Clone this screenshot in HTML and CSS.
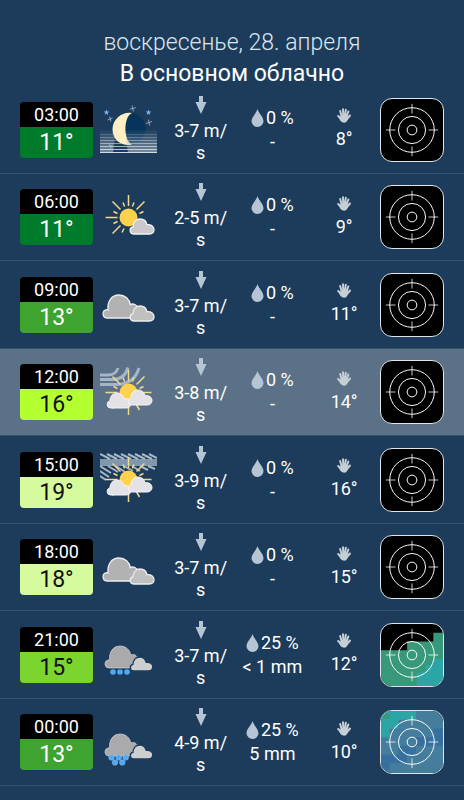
FILE: index.html
```html
<!DOCTYPE html>
<html lang="ru">
<head>
  <meta charset="UTF-8" />
  <meta name="viewport" content="width=device-width, initial-scale=1.0"/>
  <title>Прогноз погоды</title>
  <link rel="stylesheet" href="styles.css">
</head>
<body>
  <!-- shared icons -->
  <svg class="sprite" aria-hidden="true">
    <defs>
      <linearGradient id="fog" x1="0" y1="0" x2="0" y2="1">
        <stop offset="0" stop-color="#a9b8c6" stop-opacity="0"/>
        <stop offset="1" stop-color="#a9b8c6" stop-opacity=".65"/>
      </linearGradient>
    </defs>

    <symbol id="arrow" viewBox="0 0 12 18">
      <path d="M4 0h4v6h3.5L6 18 .5 6H4z" fill="#b5c5d3"/>
    </symbol>

    <symbol id="drop" viewBox="0 0 13 18">
      <path d="M6.500 0C7.500 4 12.500 8 12.500 12.200a6 5.800 0 0 1-12 0C.5 8 5.500 4 6.500 0z" fill="#b5c5d3"/>
    </symbol>

    <symbol id="hand" viewBox="0 0 14 15">
      <g fill="none" stroke="#c6cfd6" stroke-width="2" stroke-linecap="round">
        <path d="M4.800 9 3.200 3M6.400 8 6 1.200M8 8l.8-6.300M9.500 9l1.800-5.500M10 11l3-3.500M4.500 11.500 1.200 8"/>
      </g>
      <path d="M4 7.500h6l1.200 2.500c-.5 3-2 4.700-4.200 4.700S3 12.800 2.300 10.500z" fill="#c6cfd6"/>
    </symbol>

    <symbol id="target" viewBox="0 0 64 64">
      <g fill="none" stroke="#fff">
        <circle cx="32" cy="32" r="5"/>
        <circle cx="32" cy="32" r="14"/>
        <circle cx="32" cy="32" r="23"/>
        <path d="M32 5v10M32 49v10M5 32h10M49 32h10" stroke-opacity=".8"/>
      </g>
    </symbol>

    <symbol id="small-cloud" viewBox="0 0 26 17">
      <path d="M4.500 16a3.600 3.600 0 0 1-.6-7.100C4.200 4 7.200 1 11 1c3.600 0 6.300 2.300 7 5.700 3.800-.5 7 1.500 7 4.800 0 2.700-2 4.500-4.800 4.500z"/>
    </symbol>

    <symbol id="big-cloud" viewBox="0 0 38 25">
      <path d="M5 24a4.200 4.200 0 0 1-.6-8.300c.6-.2 1.300 0 1.700.2C5 7.500 9.500 1 17 1c6 0 10.600 4.200 11.200 9.600 3.200-1.600 6.800.2 7.300 3.400.5 2-.2 4-1 5.500L30 24z"/>
    </symbol>

    <symbol id="sun" viewBox="0 0 57 57">
      <g stroke="#f0d98c" stroke-width="1.500">
        <path d="M28.500 6v11M44.500 12.500l-8 8M12.500 12.500l8 8M5.500 28.500h12M12.500 44.500l8-8"/>
        <path d="M23 13.500l1.600 4M34 13.500l-1.600 4M13.500 22.500l4 2M43.500 22.500l-4 2M13.500 34.500l4-2M22 43.500l2-4"/>
      </g>
      <circle cx="28.500" cy="28.500" r="9" fill="#ffd24d"/>
    </symbol>

    <symbol id="night" viewBox="0 0 57 57">
      <circle cx="29" cy="28" r="16.500" fill="#06345a"/>
      <path d="M32 12C24 10 12.500 16.500 12.500 28.500S24 46 32 43.500C23.500 40 23 16 32 12z" fill="#fff0c4"/>
      <path d="M0 28h16l-3 24H0zM25 28h32v24H28z" fill="url(#fog)"/>
      <g stroke="#d3dce3">
        <path d="M0 33.500h13M26 33.500h31" opacity=".2"/>
        <path d="M0 36.500h15M27 36.500h30" opacity=".3"/>
        <path d="M0 39.500h17M28 39.500h29" opacity=".45"/>
        <path d="M0 42.500h21M30 42.500h27" opacity=".6"/>
        <path d="M0 45.500h57" opacity=".75"/>
        <path d="M0 48.500h57" opacity=".85"/>
        <path d="M0 51.500h57"/>
      </g>
      <path d="M6.500 8.500l.8 2 2.100.1-1.700 1.300.6 2.100-1.800-1.200L4.700 14l.6-2.100-1.700-1.300 2.100-.1zM48.500 8.500l.8 2 2.100.1-1.700 1.300.6 2.100-1.800-1.200-1.800 1.200.6-2.100-1.700-1.300 2.100-.1z" fill="#70b4f5"/>
      <path d="M32 4.500l1.500 6M29.800 8.200l6-1.500M9.500 15.500l1.500 5M7.500 19l5-2M48.500 18.500l1 6M46 22.500l6-2M9 42.500l2 5M7.500 46l5-2" stroke="#a7b9c8" stroke-width=".8"/>
    </symbol>

    <symbol id="sun-cloud" viewBox="0 0 57 57">
      <use href="#sun" width="57" height="57"/>
      <use href="#small-cloud" x="29" y="29" width="26" height="17" fill="#c9c9ce" stroke="#f3f3f6" stroke-width="1.300"/>
    </symbol>

    <symbol id="clouds" viewBox="0 0 57 57">
      <use href="#big-cloud" x="2" y="18" width="38" height="25" fill="#b2b2b2" stroke="#ededf0" stroke-width="1.300"/>
      <use href="#small-cloud" x="29" y="29" width="26" height="17" fill="#c0c0c0" stroke="#ededf0" stroke-width="1.300"/>
    </symbol>

    <symbol id="sun-two-clouds" viewBox="0 0 57 57">
      <use href="#sun" width="57" height="57"/>
      <path d="M39 28.500h12.500M28.500 40v11M36 40l3.500 6" stroke="#f0d98c" stroke-width="1.500"/>
      <use href="#small-cloud" x="6" y="28" width="26" height="17" fill="#e2e2e7" stroke="#f6f6f8"/>
      <use href="#small-cloud" x="27" y="25" width="26" height="17" fill="#e2e2e7" stroke="#f6f6f8"/>
    </symbol>

    <symbol id="windy" viewBox="0 0 57 57">
      <g fill="none" stroke="#a5b4c8" stroke-width="3">
        <path d="M0 11h8c5 0 9-3 10-7M0 15.500h13c8 0 13-5 15-12M0 20.500h16c12 0 20-6 23-16.500"/>
      </g>
      <use href="#sun-two-clouds" width="57" height="57"/>
    </symbol>

    <symbol id="veil" viewBox="0 0 57 57">
      <path d="M0 8h57v7H0z" fill="#8197ab"/>
      <g fill="none" stroke="#a9b7c4" stroke-width="2">
        <path d="M0 3l10 5M7 3l10 5M14 3l10 5M21 3l10 5M28 3l10 5M35 3l10 5M42 3l10 5M49 3l8 4"/>
        <path d="M0 15l11 7M0 20l9 6M0 25l6 4M8 15l10 6M16 15l9 6M24 15l9 5M32 15l8 5M40 15l8 4M48 15l7 3"/>
      </g>
      <use href="#sun-two-clouds" width="57" height="57"/>
    </symbol>

    <symbol id="rain-clouds" viewBox="0 0 57 57">
      <use href="#big-cloud" x="4" y="19" width="36" height="24" fill="#aaaaad" stroke="#c3c7cc"/>
      <use href="#small-cloud" x="29" y="30" width="25" height="16" fill="#cdcfd1" stroke="#1d3c5b" stroke-width="1.500"/>
    </symbol>

    <symbol id="rain" viewBox="0 0 57 57">
      <use href="#rain-clouds" width="57" height="57"/>
      <g fill="#4fa9f7">
        <circle cx="13" cy="46" r="2.800"/>
        <circle cx="20" cy="46" r="2.800"/>
        <circle cx="27" cy="46" r="2.800"/>
      </g>
    </symbol>

    <symbol id="heavy-rain" viewBox="0 0 57 57">
      <use href="#rain-clouds" width="57" height="57"/>
      <g fill="#4fa9f7" stroke="#8fc4f2" stroke-width=".5">
        <circle cx="11.500" cy="43.500" r="2.800"/>
        <circle cx="18.700" cy="43.500" r="2.800"/>
        <circle cx="25.700" cy="43.500" r="2.800"/>
        <circle cx="15" cy="48.500" r="2.800"/>
        <circle cx="22.300" cy="48.500" r="2.800"/>
      </g>
    </symbol>
  </svg>

  <header class="day">
    <h1 class="day-date">воскресенье, 28. апреля</h1>
    <p class="day-summary">В основном облачно</p>
  </header>

  <table class="forecast">
    <colgroup>
      <col class="col-time">
      <col span="4">
      <col class="col-radar">
    </colgroup>
    <tbody>
      <tr>
        <th scope="row"><div class="badge"><span class="time">03:00</span><span class="temp t11">11°</span></div></th>
        <td><svg class="sky"><use href="#night"/></svg></td>
        <td class="wind"><svg class="arrow"><use href="#arrow"/></svg>3-7 m/<br>s</td>
        <td class="rain"><div class="chance"><svg class="drop"><use href="#drop"/></svg>0 %</div>-</td>
        <td class="feels"><svg class="hand"><use href="#hand"/></svg>8°</td>
        <td><svg class="radar"><use href="#target"/></svg></td>
      </tr>
      <tr>
        <th scope="row"><div class="badge"><span class="time">06:00</span><span class="temp t11">11°</span></div></th>
        <td><svg class="sky"><use href="#sun-cloud"/></svg></td>
        <td class="wind"><svg class="arrow"><use href="#arrow"/></svg>2-5 m/<br>s</td>
        <td class="rain"><div class="chance"><svg class="drop"><use href="#drop"/></svg>0 %</div>-</td>
        <td class="feels"><svg class="hand"><use href="#hand"/></svg>9°</td>
        <td><svg class="radar"><use href="#target"/></svg></td>
      </tr>
      <tr>
        <th scope="row"><div class="badge"><span class="time">09:00</span><span class="temp t13">13°</span></div></th>
        <td><svg class="sky"><use href="#clouds"/></svg></td>
        <td class="wind"><svg class="arrow"><use href="#arrow"/></svg>3-7 m/<br>s</td>
        <td class="rain"><div class="chance"><svg class="drop"><use href="#drop"/></svg>0 %</div>-</td>
        <td class="feels"><svg class="hand"><use href="#hand"/></svg>11°</td>
        <td><svg class="radar"><use href="#target"/></svg></td>
      </tr>
      <tr class="current">
        <th scope="row"><div class="badge"><span class="time">12:00</span><span class="temp t16">16°</span></div></th>
        <td><svg class="sky"><use href="#windy"/></svg></td>
        <td class="wind"><svg class="arrow"><use href="#arrow"/></svg>3-8 m/<br>s</td>
        <td class="rain"><div class="chance"><svg class="drop"><use href="#drop"/></svg>0 %</div>-</td>
        <td class="feels"><svg class="hand"><use href="#hand"/></svg>14°</td>
        <td><svg class="radar"><use href="#target"/></svg></td>
      </tr>
      <tr>
        <th scope="row"><div class="badge"><span class="time">15:00</span><span class="temp t18">19°</span></div></th>
        <td><svg class="sky"><use href="#veil"/></svg></td>
        <td class="wind"><svg class="arrow"><use href="#arrow"/></svg>3-9 m/<br>s</td>
        <td class="rain"><div class="chance"><svg class="drop"><use href="#drop"/></svg>0 %</div>-</td>
        <td class="feels"><svg class="hand"><use href="#hand"/></svg>16°</td>
        <td><svg class="radar"><use href="#target"/></svg></td>
      </tr>
      <tr>
        <th scope="row"><div class="badge"><span class="time">18:00</span><span class="temp t18">18°</span></div></th>
        <td><svg class="sky"><use href="#clouds"/></svg></td>
        <td class="wind"><svg class="arrow"><use href="#arrow"/></svg>3-7 m/<br>s</td>
        <td class="rain"><div class="chance"><svg class="drop"><use href="#drop"/></svg>0 %</div>-</td>
        <td class="feels"><svg class="hand"><use href="#hand"/></svg>15°</td>
        <td><svg class="radar"><use href="#target"/></svg></td>
      </tr>
      <tr>
        <th scope="row"><div class="badge"><span class="time">21:00</span><span class="temp t15">15°</span></div></th>
        <td><svg class="sky"><use href="#rain"/></svg></td>
        <td class="wind"><svg class="arrow"><use href="#arrow"/></svg>3-7 m/<br>s</td>
        <td class="rain"><div class="chance"><svg class="drop"><use href="#drop"/></svg>25 %</div>&lt; 1 mm</td>
        <td class="feels"><svg class="hand"><use href="#hand"/></svg>12°</td>
        <td>
          <svg class="radar" viewBox="0 0 64 64">
            <path d="M0 27h27v-9h27V9h10v55H0z" fill="#37997a"/>
            <path d="M64 36h-9v6h-9v8h-9v14h27z" fill="#2ba5a6"/>
            <use href="#target"/>
          </svg>
        </td>
      </tr>
      <tr>
        <th scope="row"><div class="badge"><span class="time">00:00</span><span class="temp t13">13°</span></div></th>
        <td><svg class="sky"><use href="#heavy-rain"/></svg></td>
        <td class="wind"><svg class="arrow"><use href="#arrow"/></svg>4-9 m/<br>s</td>
        <td class="rain"><div class="chance"><svg class="drop"><use href="#drop"/></svg>25 %</div>5 mm</td>
        <td class="feels"><svg class="hand"><use href="#hand"/></svg>10°</td>
        <td>
          <svg class="radar" viewBox="0 0 64 64">
            <path d="M0 0h64v64H0z" fill="#457e9d"/>
            <path d="M0 0h36v9H18v9H9v9H0z" fill="#2ba5a6"/>
            <path d="M3 3h6v5H3z" fill="#37997a"/>
            <path d="M54 18h10v18H36v9H27v9H9v7H0V45h18v-9h18v-9h18z" fill="#376f9f"/>
            <use href="#target"/>
          </svg>
        </td>
      </tr>
    </tbody>
  </table>
</body>
</html>
```

FILE: styles.css
```css
body {
  margin: 0;
  min-height: 100vh;
  background-color: #1d3c5b;
  color: #fff;
  font-family: Roboto, sans-serif;
  font-size: 18px;
}
svg {
  display: block;
}
.sprite {
  position: absolute;
  width: 0;
  height: 0;
}
.day {
  box-sizing: border-box;
  padding: 27px 20px 0;
  height: 86px;
  text-align: center;
}
.day-date,
.day-summary {
  margin: 0;
  font-size: 23px;
  line-height: 31px;
}
.day-date {
  font-weight: 300;
  color: #dbe7ee;
}
.day-summary {
  font-weight: 400;
}
.forecast {
  width: 100%;
  table-layout: fixed;
  border-collapse: separate;
  border-spacing: 0;
}
.col-time {
  width: 93px;
}
.col-radar {
  width: 84px;
}
.forecast tr {
  height: 88px;
}
.forecast tr:nth-child(even) {
  height: 87px;
}
.forecast th,
.forecast td {
  padding: 0;
  border-bottom: 1px solid #33536f;
  font-weight: 400;
  text-align: center;
  vertical-align: middle;
}
.current {
  background-color: #5a7187;
}
.badge {
  margin-left: 20px;
  border-radius: 4px;
  overflow: hidden;
}
.time,
.temp {
  display: block;
}
.time {
  background: #000;
  line-height: 25px;
}
.temp {
  font-size: 23px;
  line-height: 31px;
}
.t11 {
  background: #007a2b;
}
.t13 {
  background: #3ea42f;
}
.t15 {
  background: #7cd42e;
  color: #111;
}
.t16 {
  background: #b4ff2f;
  color: #111;
}
.t18 {
  background: #d6fa9e;
  color: #111;
}
.sky {
  width: 57px;
  height: 57px;
  margin: 0 auto;
}
.wind {
  line-height: 22px;
}
.arrow {
  width: 12px;
  height: 18px;
  margin: 0 auto 6px;
}
.rain,
.feels {
  line-height: 24px;
}
.chance {
  display: flex;
  justify-content: center;
  align-items: center;
  gap: 2px;
}
.drop {
  width: 13px;
  height: 18px;
}
.hand {
  width: 14px;
  height: 15px;
  margin: 0 auto 4px;
}
.radar {
  box-sizing: border-box;
  width: 64px;
  height: 64px;
  border: 1px solid #dfe6ea;
  border-radius: 12px;
  background: #000;
}
```
